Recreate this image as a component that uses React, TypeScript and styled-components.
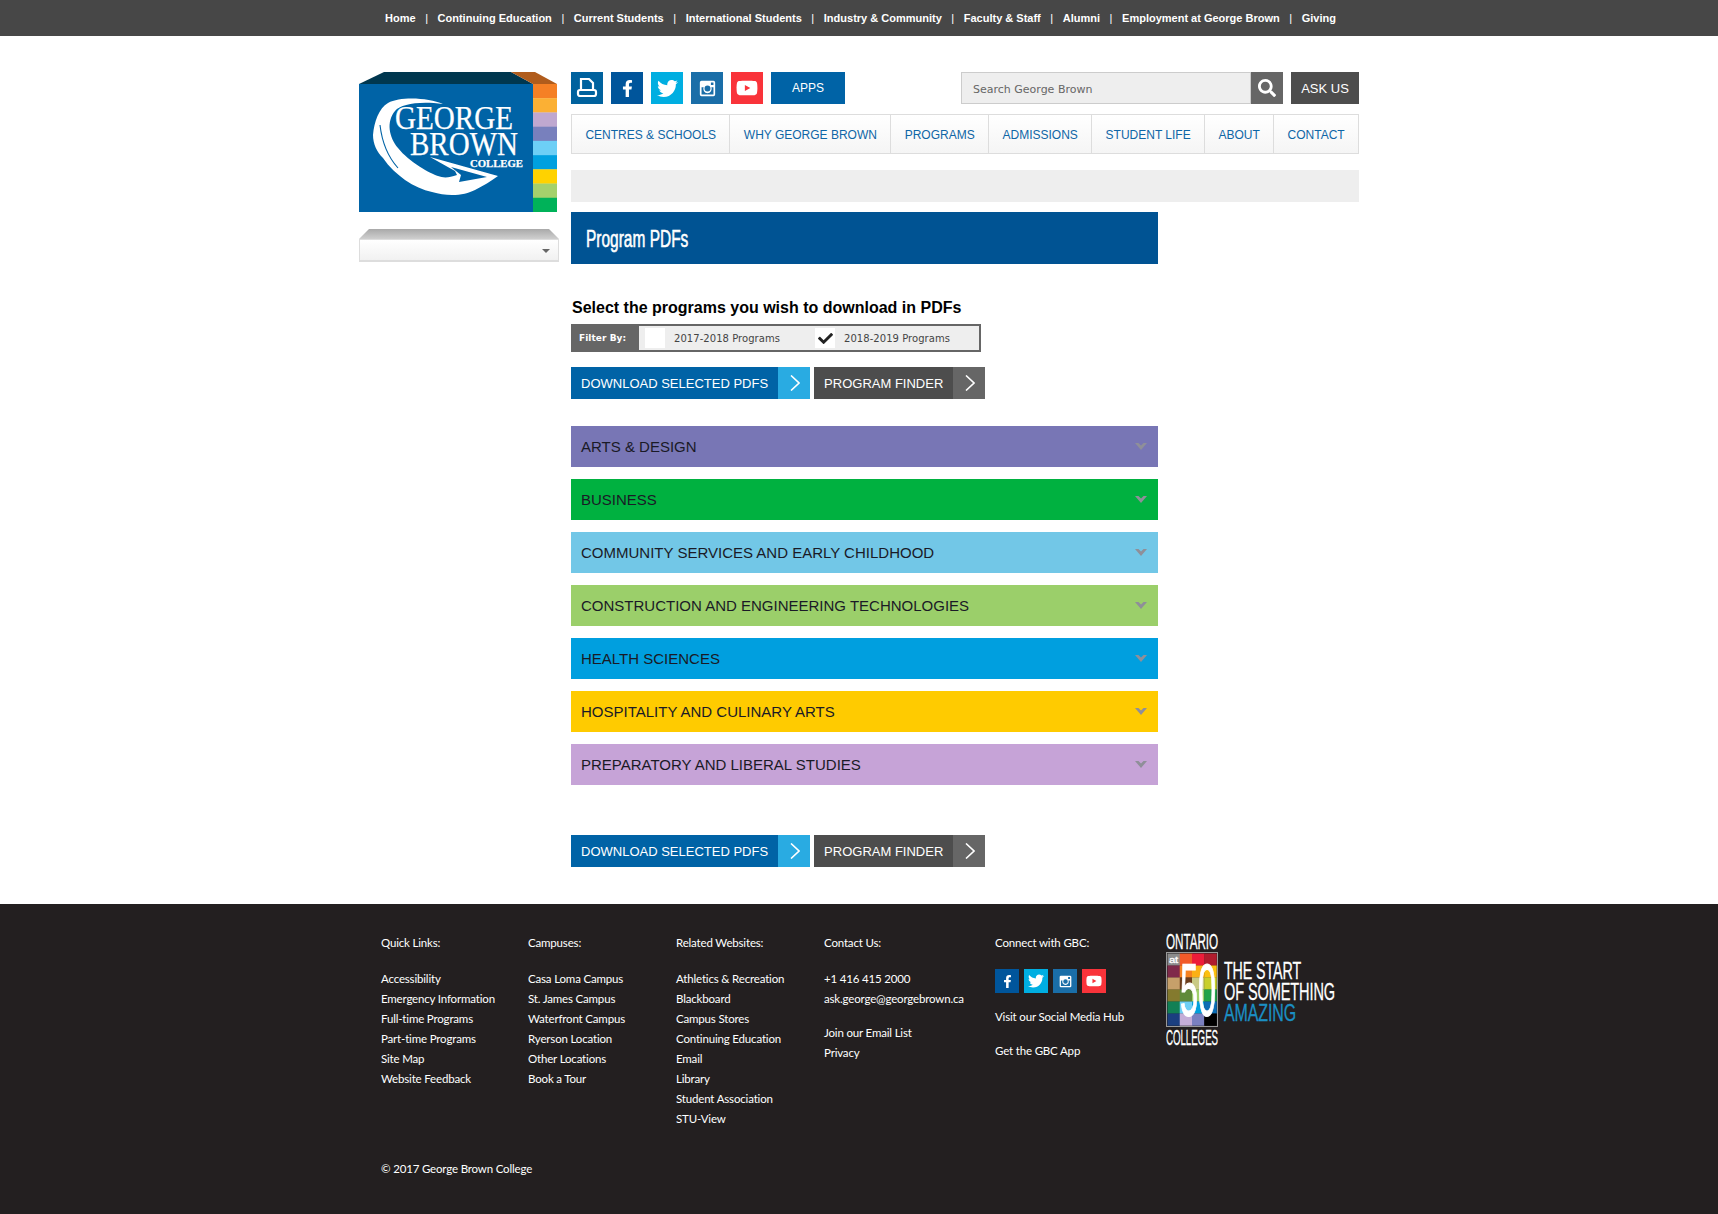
import styled, { createGlobalStyle } from "styled-components";
import { FaCheck, FaFacebookF, FaSearch, FaTwitter, FaYoutube } from "react-icons/fa";

const GlobalStyle = createGlobalStyle`
  html, body {
    margin: 0;
    padding: 0;
    background: #fff;
    font-family: "Liberation Sans", Arial, sans-serif;
  }
  * {
    box-sizing: border-box;
  }
`;

const TopBar = styled.div`
  height: 36px;
  background: #474747;
  display: flex;
  align-items: center;
  justify-content: center;
  padding-left: 3px;
  color: #fff;
  font-size: 11px;
  font-weight: bold;
`;

const TopItem = styled.span`
  display: contents;
`;

const TopLink = styled.a`
  color: #fff;
  white-space: nowrap;
`;

const TopSep = styled.span`
  width: 22px;
  text-align: center;
  font-weight: normal;
`;

const Page = styled.div`
  width: 1000px;
  margin: 0 auto;
  padding-top: 36px;
  display: flex;
  gap: 12px;
`;

const Side = styled.div`
  width: 200px;
  flex: none;
`;

const LogoSvg = styled.svg`
  display: block;
`;

const Dropdown = styled.div`
  margin-top: 17px;
`;

const DropRoof = styled.div`
  height: 10px;
  background: linear-gradient(#a9a9a9, #cfcfcf);
  clip-path: polygon(5% 0, 95% 0, 100% 100%, 0 100%);
`;

const DropBox = styled.div`
  height: 23px;
  border: 1px solid #ddd;
  border-bottom-width: 2px;
  background: linear-gradient(#fff, #f1f1f1);
  display: flex;
  align-items: center;
  justify-content: flex-end;
  padding-right: 8px;
`;

const Caret = styled.span`
  width: 0;
  height: 0;
  border-left: 4px solid transparent;
  border-right: 4px solid transparent;
  border-top: 4px solid #666;
  margin-top: 2px;
`;

const Main = styled.div`
  width: 788px;
`;

const Toolbar = styled.div`
  display: flex;
  height: 32px;
`;

const IconBtn = styled.a<{ $bg: string }>`
  width: 32px;
  height: 32px;
  margin-right: 8px;
  background: ${(p) => p.$bg};
  color: #fff;
  display: flex;
  align-items: center;
  justify-content: center;
  font-size: 17px;
`;

const AppsBtn = styled.a`
  width: 74px;
  background: #0063a6;
  color: #fff;
  font-size: 12px;
  display: flex;
  align-items: center;
  justify-content: center;
`;

const SearchWrap = styled.div`
  margin-left: auto;
  display: flex;
`;

const SearchInput = styled.input`
  width: 290px;
  height: 32px;
  border: 1px solid #ccc;
  background: #eee;
  padding: 2px 11px 0;
  font-family: "DejaVu Sans", Verdana, sans-serif;
  font-size: 11px;
  outline: none;
  &::placeholder {
    color: #666;
    opacity: 1;
  }
`;

const SearchBtn = styled.div`
  width: 32px;
  background: #666;
  color: #fff;
  font-size: 18px;
  display: flex;
  align-items: center;
  justify-content: center;
`;

const AskBtn = styled.a`
  width: 68px;
  margin-left: 8px;
  background: #4d4d4d;
  color: #fff;
  font-size: 13px;
  display: flex;
  align-items: center;
  justify-content: center;
`;

const Nav = styled.nav`
  margin-top: 10px;
  height: 40px;
  display: flex;
  border: 1px solid #ddd;
  background: linear-gradient(#fff, #f5f5f5);
`;

const NavItem = styled.a`
  flex: 1 1 auto;
  display: flex;
  align-items: center;
  justify-content: center;
  padding: 2px 13px 0;
  color: #0f66a6;
  font-size: 12px;
  border-left: 1px solid #ddd;
  white-space: nowrap;
  &:first-child {
    border-left: 0;
  }
`;

const Breadcrumb = styled.div`
  margin-top: 16px;
  height: 32px;
  background: #eee;
`;

const Content = styled.div`
  width: 587px;
  margin-top: 10px;
`;

const Title = styled.div`
  height: 52px;
  background: #005393;
  color: #fff;
  display: flex;
  align-items: center;
  padding: 2px 0 0 15px;
`;

const TitleText = styled.h1`
  margin: 0;
  font-size: 24px;
  font-weight: normal;
  white-space: nowrap;
  transform: scaleX(0.645);
  transform-origin: left center;
  -webkit-text-stroke: 0.6px #fff;
`;

const Lead = styled.h2`
  margin: 34px 0 0 1px;
  font-size: 16px;
  line-height: 20px;
  font-weight: bold;
  color: #000;
`;

const Filter = styled.div`
  margin-top: 6px;
  width: 410px;
  height: 28px;
  border: 2px solid #666;
  border-left: 0;
  background: #eee;
  display: flex;
  align-items: center;
  font-family: "DejaVu Sans", Verdana, sans-serif;
  font-size: 10px;
  letter-spacing: 0.05px;
  color: #444;
`;

const FilterLabel = styled.div`
  width: 68px;
  flex: none;
  height: 100%;
  background: #666;
  color: #fff;
  font-weight: bold;
  font-size: 9px;
  padding-left: 8px;
  display: flex;
  align-items: center;
`;

const FilterOption = styled.div`
  width: 170px;
  flex: none;
  display: flex;
  align-items: center;
  &:nth-child(2) {
    margin-left: 6px;
  }
  &:last-child {
    width: 160px;
  }
`;

const Check = styled.span`
  width: 20px;
  height: 20px;
  margin-right: 9px;
  background: #fff;
  color: #222;
  font-size: 15px;
  display: flex;
  align-items: center;
  justify-content: center;
`;

const Actions = styled.div<{ $top: number }>`
  margin-top: ${(p) => p.$top}px;
  display: flex;
  gap: 4px;
`;

const ActionBtn = styled.a<{ $main: string; $side: string }>`
  display: flex;
  height: 32px;
  background: ${(p) => p.$main};
  color: #fff;
  font-size: 13px;
  white-space: nowrap;
  align-items: center;
  padding-left: 10px;
  & > svg {
    margin-left: 10px;
    width: 32px;
    height: 32px;
    padding: 8px 10px 8px 12px;
    background: ${(p) => p.$side};
  }
`;

const Accordions = styled.div`
  margin-top: 27px;
  display: flex;
  flex-direction: column;
  gap: 12px;
`;

const Accordion = styled.div<{ $bg: string }>`
  height: 41px;
  background: ${(p) => p.$bg};
  color: #1a1a26;
  font-size: 15px;
  display: flex;
  align-items: center;
  justify-content: space-between;
  padding: 0 11px 0 10px;
`;

const Footer = styled.footer`
  margin-top: 37px;
  height: 310px;
  background: #231f20;
  color: #fff;
  font-family: Lato, sans-serif;
  font-size: 11.5px;
  line-height: 20px;
  letter-spacing: -0.17px;
`;

const FooterInner = styled.div`
  width: 1000px;
  margin: 0 auto;
  padding: 29px 0 0 22px;
`;

const FooterCols = styled.div`
  display: grid;
  grid-template-columns: 147px 148px 148px 171px 171px 1fr;
  height: 226px;
`;

const FooterCol = styled.div``;

const FooterHead = styled.div`
  margin-bottom: 16px;
`;

const FooterLink = styled.a<{ $gap?: number }>`
  display: block;
  color: #fff;
  margin-top: ${(p) => p.$gap ?? 0}px;
`;

const SocialRow = styled.div`
  display: flex;
  gap: 5px;
  margin: 16px 0 14px;
`;

const SocialIcon = styled.a<{ $bg: string }>`
  width: 24px;
  height: 24px;
  background: ${(p) => p.$bg};
  color: #fff;
  font-size: 13px;
  display: flex;
  align-items: center;
  justify-content: center;
`;

const BadgeSvg = styled.svg`
  display: block;
`;

const nav = ["CENTRES & SCHOOLS", "WHY GEORGE BROWN", "PROGRAMS", "ADMISSIONS", "STUDENT LIFE", "ABOUT", "CONTACT"];
const top = [
  "Home",
  "Continuing Education",
  "Current Students",
  "International Students",
  "Industry & Community",
  "Faculty & Staff",
  "Alumni",
  "Employment at George Brown",
  "Giving",
];
const areas = [
  ["ARTS & DESIGN", "#7876b5"],
  ["BUSINESS", "#00b140"],
  ["COMMUNITY SERVICES AND EARLY CHILDHOOD", "#72c7e7"],
  ["CONSTRUCTION AND ENGINEERING TECHNOLOGIES", "#9bcf6a"],
  ["HEALTH SCIENCES", "#009fdf"],
  ["HOSPITALITY AND CULINARY ARTS", "#ffcb00"],
  ["PREPARATORY AND LIBERAL STUDIES", "#c6a3d7"],
];
const strip = ["#f58025", "#fbb034", "#bfa8d0", "#7880bd", "#6dcff6", "#00a0e0", "#ffd200", "#a4d16c", "#00b259"];
const mosaic = [
  ["#8c8c8c", "#f15a29", "#ed1c3a", "#b01c2e"],
  ["#7f2a4a", "#f58220", "#fbb016", "#fcc010"],
  ["#c6a06a", "#6b3d1d", "#c9c985", "#c9cf2d"],
  ["#847a2e", "#5f8a3a", "#9fd06a", "#1fa34a"],
  ["#128055", "#6dcff6", "#00a0dc", "#0b6db5"],
  ["#1b3f80", "#c5aed8", "#7a80c0", "#000000"],
];

const Insta = () => (
  <svg width="1em" height="1em" viewBox="0 0 20 20">
    <path fill="currentColor" fillRule="evenodd" d="M3 1h14a2 2 0 0 1 2 2v14a2 2 0 0 1-2 2H3a2 2 0 0 1-2-2V3a2 2 0 0 1 2-2zm11 2v3h3V3zM3 8.500V17h14V8.500h-2.400a5 5 0 1 1-9.200 0zM10 6.500a3.500 3.500 0 1 0 0 7 3.500 3.500 0 0 0 0-7z" />
  </svg>
);

const Printer = () => (
  <svg width="22" height="22" viewBox="0 0 22 22" fill="none" stroke="currentColor" strokeWidth="2.200">
    <path d="M5 12V2h8l4 4v6" />
    <rect x="2" y="13" width="18" height="6" rx="2" />
  </svg>
);

const Arrow = () => (
  <svg viewBox="0 0 10 16" fill="none" stroke="#fff" strokeWidth="1.600">
    <path d="M1 0.500 9 8l-8 7.500" />
  </svg>
);

const Down = () => (
  <svg width="12" height="7" viewBox="0 0 12 7">
    <path fill="#8f8f99" d="M0 0h3.500L6 2.500 8.500 0H12L6 7z" />
  </svg>
);

const Logo = () => (
  <LogoSvg width="198" height="140" viewBox="0 0 198 140">
    <polygon points="25,0 152,0 174,12 0,12" fill="#00374f" />
    <polygon points="152,0 176,0 198,12 174,12" fill="#b05c1c" />
    <rect y="12" width="174" height="128" fill="#0063a6" />
    {strip.map((c, i) => (
      <rect key={c} x="174" y={12 + i * 14.22} width="24" height="14.5" fill={c} />
    ))}
    <path
      fill="#fff"
      d="M84 32C70 26 42 24 29 31C20 36 15 50 14 63C14 72 18 80 24 86C30 95 38 102 46 108C55 114 64 118 73 120C80 122 86 123 93 123C102 123 110 121 116 118C124 114 132 109 139 104L71 85L96 99L98 103C90 106 84 106 79 104C72 102 50 90 39 76C30 65 27 50 36 39C42 32 60 29 84 32Z"
    />
    <path fill="none" stroke="#0063a6" strokeWidth="1.100" d="M21 53C23 70 29 85 39 96" />
    <polygon points="100,110 128,105 92,95 102,103" fill="#0063a6" />
    <g fill="#fff" stroke="#fff" strokeWidth="0.250" fontFamily="Liberation Serif, serif">
      <text x="36" y="57" fontSize="33" textLength="118" lengthAdjust="spacingAndGlyphs">GEORGE</text>
      <text x="51" y="83" fontSize="33" textLength="108" lengthAdjust="spacingAndGlyphs">BROWN</text>
      <text x="111" y="95" fontSize="10" fontWeight="bold" textLength="53" lengthAdjust="spacingAndGlyphs">COLLEGE</text>
    </g>
  </LogoSvg>
);

const Badge = () => (
  <BadgeSvg width="172" height="116" viewBox="0 0 172 116">
    <g fill="#fff" stroke="#fff" strokeWidth="0.300" fontFamily="Liberation Sans, sans-serif">
      <text x="0" y="16" fontSize="22" textLength="52" lengthAdjust="spacingAndGlyphs">ONTARIO</text>
    </g>
    <rect x="0.500" y="19.500" width="51" height="74" fill="none" stroke="#999" />
    {mosaic.map((row, r) =>
      row.map((c, i) => <rect key={`${r}-${i}`} x={1.5 + i * 12.25} y={20.5 + r * 12} width="12.500" height="12.200" fill={c} />)
    )}
    <g fill="#fff" stroke="#fff" strokeWidth="0.300" fontFamily="Liberation Sans, sans-serif">
      <text x="3" y="30" fontSize="9" textLength="9" lengthAdjust="spacingAndGlyphs">at</text>
      <text x="14" y="83" fontSize="74" strokeWidth="1.200" textLength="36" lengthAdjust="spacingAndGlyphs">50</text>
      <text x="0" y="112" fontSize="22" textLength="52" lengthAdjust="spacingAndGlyphs">COLLEGES</text>
      <text x="58" y="46" fontSize="24" textLength="77" lengthAdjust="spacingAndGlyphs">THE START</text>
      <text x="58" y="67" fontSize="24" textLength="111" lengthAdjust="spacingAndGlyphs">OF SOMETHING</text>
      <text x="58" y="88" fontSize="24" textLength="72" lengthAdjust="spacingAndGlyphs" fill="#1b8fc4" stroke="#1b8fc4">AMAZING</text>
    </g>
  </BadgeSvg>
);

const Buttons = ({ top: offset }: { top: number }) => (
  <Actions $top={offset}>
    <ActionBtn $main="#0063a6" $side="#29abe2">
      DOWNLOAD SELECTED PDFS
      <Arrow />
    </ActionBtn>
    <ActionBtn $main="#4d4d4d" $side="#666">
      PROGRAM FINDER
      <Arrow />
    </ActionBtn>
  </Actions>
);

const quick = ["Accessibility", "Emergency Information", "Full-time Programs", "Part-time Programs", "Site Map", "Website Feedback"];
const campuses = ["Casa Loma Campus", "St. James Campus", "Waterfront Campus", "Ryerson Location", "Other Locations", "Book a Tour"];
const related = [
  "Athletics & Recreation",
  "Blackboard",
  "Campus Stores",
  "Continuing Education",
  "Email",
  "Library",
  "Student Association",
  "STU-View",
];

export default function App() {
  return (
    <>
      <GlobalStyle />
      <TopBar>
        {top.map((t, i) => (
          <TopItem key={t}>
            {i > 0 && <TopSep>|</TopSep>}
            <TopLink>{t}</TopLink>
          </TopItem>
        ))}
      </TopBar>
      <Page>
        <Side>
          <Logo />
          <Dropdown>
            <DropRoof />
            <DropBox>
              <Caret />
            </DropBox>
          </Dropdown>
        </Side>
        <Main>
          <Toolbar>
            <IconBtn $bg="#00629e"><Printer /></IconBtn>
            <IconBtn $bg="#00559b"><FaFacebookF /></IconBtn>
            <IconBtn $bg="#00aee1"><FaTwitter size={21} /></IconBtn>
            <IconBtn $bg="#1a6ea8"><Insta /></IconBtn>
            <IconBtn $bg="#f9333a"><FaYoutube size={22} /></IconBtn>
            <AppsBtn>APPS</AppsBtn>
            <SearchWrap>
              <SearchInput placeholder="Search George Brown" />
              <SearchBtn><FaSearch /></SearchBtn>
              <AskBtn>ASK US</AskBtn>
            </SearchWrap>
          </Toolbar>
          <Nav>
            {nav.map((n) => (
              <NavItem key={n}>{n}</NavItem>
            ))}
          </Nav>
          <Breadcrumb />
          <Content>
            <Title>
              <TitleText>Program PDFs</TitleText>
            </Title>
            <Lead>Select the programs you wish to download in PDFs</Lead>
            <Filter>
              <FilterLabel>Filter By:</FilterLabel>
              <FilterOption>
                <Check />
                2017-2018 Programs
              </FilterOption>
              <FilterOption>
                <Check><FaCheck /></Check>
                2018-2019 Programs
              </FilterOption>
            </Filter>
            <Buttons top={15} />
            <Accordions>
              {areas.map(([name, color]) => (
                <Accordion key={name} $bg={color}>
                  {name}
                  <Down />
                </Accordion>
              ))}
            </Accordions>
            <Buttons top={50} />
          </Content>
        </Main>
      </Page>
      <Footer>
        <FooterInner>
          <FooterCols>
            <FooterCol>
              <FooterHead>Quick Links:</FooterHead>
              {quick.map((l) => <FooterLink key={l}>{l}</FooterLink>)}
            </FooterCol>
            <FooterCol>
              <FooterHead>Campuses:</FooterHead>
              {campuses.map((l) => <FooterLink key={l}>{l}</FooterLink>)}
            </FooterCol>
            <FooterCol>
              <FooterHead>Related Websites:</FooterHead>
              {related.map((l) => <FooterLink key={l}>{l}</FooterLink>)}
            </FooterCol>
            <FooterCol>
              <FooterHead>Contact Us:</FooterHead>
              <FooterLink>+1 416 415 2000</FooterLink>
              <FooterLink>ask.george@georgebrown.ca</FooterLink>
              <FooterLink $gap={14}>Join our Email List</FooterLink>
              <FooterLink>Privacy</FooterLink>
            </FooterCol>
            <FooterCol>
              <div>Connect with GBC:</div>
              <SocialRow>
                <SocialIcon $bg="#00559b"><FaFacebookF /></SocialIcon>
                <SocialIcon $bg="#00aee1"><FaTwitter size={16} /></SocialIcon>
                <SocialIcon $bg="#1a6ea8"><Insta /></SocialIcon>
                <SocialIcon $bg="#f9333a"><FaYoutube size={16} /></SocialIcon>
              </SocialRow>
              <FooterLink>Visit our Social Media Hub</FooterLink>
              <FooterLink $gap={14}>Get the GBC App</FooterLink>
            </FooterCol>
            <FooterCol>
              <Badge />
            </FooterCol>
          </FooterCols>
          <div>© 2017 George Brown College</div>
        </FooterInner>
      </Footer>
    </>
  );
}
